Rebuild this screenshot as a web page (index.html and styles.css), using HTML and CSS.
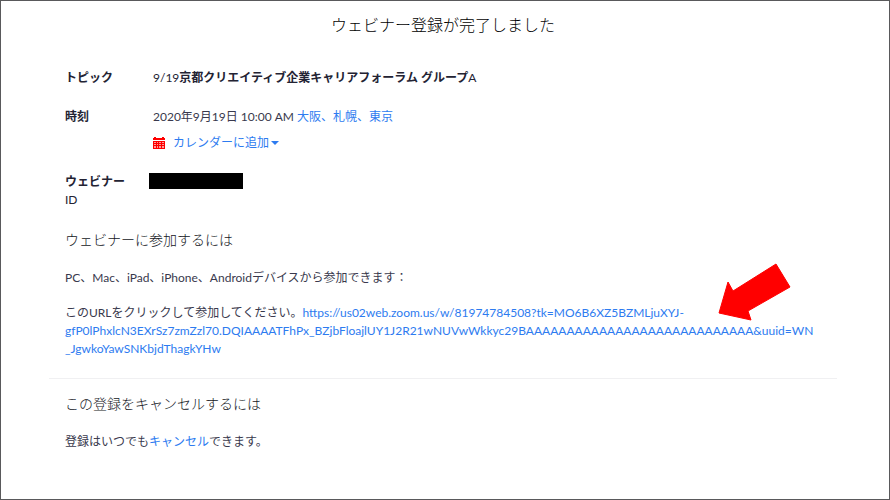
FILE: index.html
```html
<!DOCTYPE html>
<html lang="ja">
<head>
  <meta charset="UTF-8">
  <meta name="viewport" content="width=device-width, initial-scale=1">
  <title>ウェビナー登録が完了しました</title>
  <link rel="stylesheet" href="styles.css">
</head>
<body>
<main class="page">
  <h1>ウェビナー登録が完了しました</h1>

  <dl class="details">
    <dt>トピック</dt>
    <dd class="topic"><span class="latin">9/19</span>京都クリエイティブ企業キャリアフォーラム グループ<span class="latin">A</span></dd>
    <dt>時刻</dt>
    <dd>
      <div>2020年9月19日 10:00 AM <a href="#">大阪、札幌、東京</a></div>
      <a class="calendar" href="#">
        <svg class="calendar-icon" viewBox="0 0 12 12" width="12" height="12" aria-hidden="true">
          <path fill="#f00" d="M0 1h1V0h2v1h6V0h2v1h1v2H0zM0 4h12v8H0z"/>
          <path fill="#fff" fill-opacity=".6" d="M1 5h2v1H1zM4 5h1v1H4zM6 5h2v1H6zM9 5h2v1H9zM1 7h2v1H1zM4 7h1v1H4zM6 7h2v1H6zM9 7h2v1H9zM1 9h2v2H1zM4 9h1v2H4zM6 9h2v2H6zM9 9h2v2H9z"/>
        </svg>
        カレンダーに追加<span class="caret"></span>
      </a>
    </dd>
    <dt>ウェビナー <span class="latin">ID</span></dt>
    <dd><div class="masked"></div></dd>
  </dl>

  <section class="join">
    <h2>ウェビナーに参加するには</h2>
    <p>PC、Mac、iPad、iPhone、Androidデバイスから参加できます：</p>
    <p class="join-url">このURLをクリックして参加してください。<a href="#">https://us02web.zoom.us/w/81974784508?tk=MO6B6XZ5BZMLjuXYJ-<br>gfP0lPhxlcN3EXrSz7zmZzl70.DQIAAAATFhPx_BZjbFloajlUY1J2R21wNUVwWkkyc29BAAAAAAAAAAAAAAAAAAAAAAAAAAAA&amp;uuid=WN<br>_JgwkoYawSNKbjdThagkYHw</a></p>
    <svg class="arrow" viewBox="0 0 74 60" width="74" height="60" aria-hidden="true">
      <path fill="#f00" stroke="#f00" stroke-linejoin="round" d="M1 50 10 19 15 28 58 1 72 24 30 48 33 57z"/>
    </svg>
  </section>

  <section class="cancel">
    <h2>この登録をキャンセルするには</h2>
    <p>登録はいつでも<a href="#">キャンセル</a>できます。</p>
  </section>
</main>
</body>
</html>
```
FILE: styles.css
```css
* {
  box-sizing: border-box;
}
body {
  margin: 0;
  background: #fff;
  color: #39394d;
  font-family: Lato, "Noto Sans CJK JP", sans-serif;
  font-size: 12px;
  line-height: 18px;
}
.page {
  min-height: 100vh;
  padding: 12px 52px 36px 48px;
  border: 1px solid #59595b;
}
h1 {
  margin: 0 0 32px;
  color: #000;
  font-size: 16px;
  font-weight: 300;
  line-height: 24px;
  text-align: center;
}
h2 {
  margin: 0 0 20px;
  color: #131623;
  font-size: 14px;
  font-weight: 300;
  line-height: 18px;
}
p {
  margin: 0;
}
a {
  color: #2d7bf0;
  text-decoration: none;
}
.details {
  display: grid;
  grid-template-columns: 68px 1fr;
  gap: 21px 20px;
  margin: 0 16px 22px;
}
.details dt {
  color: #232333;
  font-weight: 700;
}
.details dd {
  margin: 0;
}
.topic {
  color: #232333;
  font-weight: 700;
}
.latin {
  font-weight: 400;
}
.calendar {
  display: flex;
  align-items: center;
  margin-top: 8px;
}
.calendar-icon {
  margin-right: 8px;
}
.caret {
  margin-left: 2px;
  border: 4px solid transparent;
  border-top-color: #2d7bf0;
  border-bottom: 0;
}
.masked {
  width: 94px;
  height: 16px;
  margin-left: -4px;
  background: #000;
}
.join {
  position: relative;
  padding: 0 16px 20px;
  border-bottom: 1px solid #f0f0f2;
}
.join-url {
  margin-top: 17px;
}
.arrow {
  position: absolute;
  top: 32px;
  right: 45px;
}
.cancel {
  padding: 16px 16px 0;
}
```
